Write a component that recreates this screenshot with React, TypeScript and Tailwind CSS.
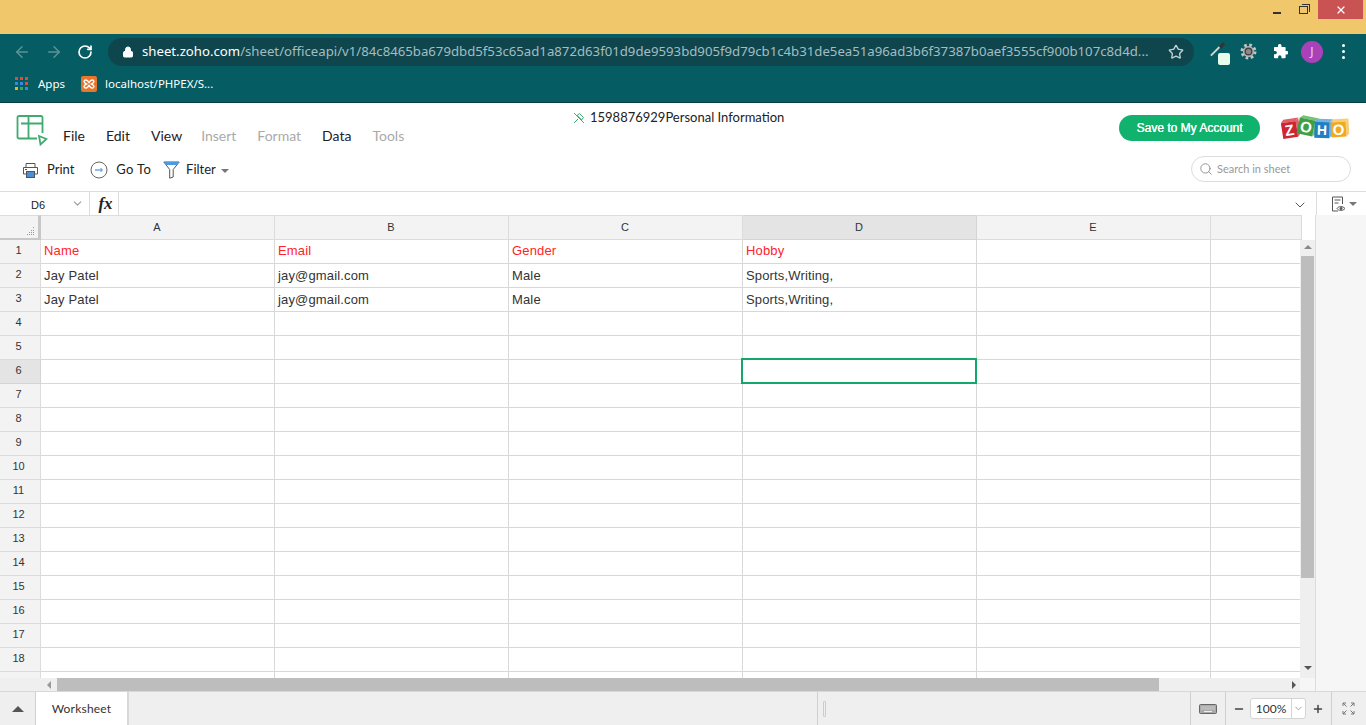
import { ArrowLeft, ArrowRight, RotateCw, Lock, Star, Minus, Plus, X, ChevronDown, Search } from "lucide-react";

const rows = Array.from({ length: 19 }, (_, i) => i + 1);
const cols = ["A", "B", "C", "D", "E", ""];
const data: Record<number, string[]> = {
  1: ["Name", "Email", "Gender", "Hobby"],
  2: ["Jay Patel", "jay@gmail.com", "Male", "Sports,Writing,"],
  3: ["Jay Patel", "jay@gmail.com", "Male", "Sports,Writing,"],
};

function SheetLogo() {
  return (
    <svg width="32" height="32" viewBox="0 0 32 32" fill="none" stroke="#3fab6f" strokeWidth="1.800">
      <path d="M21 23.500H3a1.500 1.500 0 0 1-1.500-1.500V2.500A1.500 1.500 0 0 1 3 1h22a1.500 1.500 0 0 1 1.500 1.500V18" />
      <path d="M5 8.500h21.500M12.500 2v21" />
      <path d="M23 21l7.500 3-6 5.500z" />
    </svg>
  );
}

function ZohoLogo() {
  const font = "'Liberation Sans',sans-serif";
  const tile = (x: number, y: number, w: number, h: number, rot: number, fill: string, side: string, letter: string, size: number) => (
    <g transform={`rotate(${rot} ${x + w / 2} ${y + h / 2})`}>
      <path d={`M${x} ${y}l3 -3h${w}l-3 3z`} fill={side} />
      <path d={`M${x + w} ${y}l3 -3v${h}l-3 3z`} fill={side} />
      <rect x={x} y={y} width={w} height={h} fill={fill} />
      <text x={x + w / 2} y={y + h / 2 + size * 0.36} fontFamily={font} fontWeight="700" fontSize={size} textAnchor="middle" fill="#fff">{letter}</text>
    </g>
  );
  return (
    <svg width="70" height="27" viewBox="0 0 70 27">
      {tile(1, 7, 15, 16, -9, "#cf2533", "#e0606a", "Z", 15)}
      {tile(17, 4, 16, 16, 12, "#3f9f45", "#74c278", "O", 15)}
      {tile(33.500, 7, 15, 16, 2, "#1f80c6", "#73b3e0", "H", 14)}
      {tile(50, 7, 15, 15, -3, "#f2a922", "#f7cd78", "O", 15)}
    </svg>
  );
}

function PrintIcon() {
  return (
    <svg width="17" height="17" viewBox="0 0 17 17" fill="none" stroke="#555" strokeWidth="1">
      <path d="M4 5V1.500h9V5M4 12H1.500V5.500h14V12H13" />
      <rect x="4.500" y="9.500" width="8" height="6" fill="#4a90d9" stroke="#555" />
      <path d="M3 7.500h2" />
    </svg>
  );
}

function GoToIcon() {
  return (
    <svg width="18" height="18" viewBox="0 0 18 18" fill="none">
      <circle cx="9" cy="9" r="8" stroke="#666" strokeWidth="1" />
      <path d="M5 9h7" stroke="#4a90d9" strokeWidth="1.200" />
      <path d="M10.500 7l2 2-2 2" stroke="#4a90d9" strokeWidth="1" />
    </svg>
  );
}

function FilterIcon() {
  return (
    <svg width="17" height="18" viewBox="0 0 17 18" fill="none">
      <path d="M.800 1h15.400l-6 7.500V16l-3.500 1.200V8.500z" stroke="#555" strokeWidth="1" />
      <path d="M.800 1h15.400l-2.400 3H3.200z" fill="#4a9be0" />
    </svg>
  );
}

function GearIcon() {
  return (
    <svg width="17" height="17" viewBox="0 0 17 17" fill="none">
      <circle cx="8.500" cy="8.500" r="6.500" stroke="#c4c4c4" strokeWidth="3" strokeDasharray="2.600 2.500" />
      <circle cx="8.500" cy="8.500" r="5.600" fill="#b4b4b4" />
      <circle cx="8.500" cy="8.500" r="4" fill="#444" />
      <circle cx="8.500" cy="8.500" r="2.600" fill="#8a8a8a" />
    </svg>
  );
}

function PuzzleIcon() {
  return (
    <svg width="16" height="16" viewBox="0 0 16 16" fill="#fff">
      <path d="M6 1.500a1.800 1.800 0 0 1 3.500 0V3h3.300a.8.800 0 0 1 .8.800V7H15a1.800 1.800 0 0 1 0 3.500h-1.400v3a.8.800 0 0 1-.8.800H9.500V13a1.700 1.700 0 0 0-3.400 0v1.300H2.800A.8.800 0 0 1 2 13.500v-3.200h1.200a1.700 1.700 0 0 0 0-3.400H2V3.800A.8.800 0 0 1 2.800 3H6z" />
    </svg>
  );
}

function AppsIcon() {
  const c = ["#e5483f", "#e5483f", "#e5483f", "#3a87e0", "#3a87e0", "#e5483f", "#f4b400", "#3aa757", "#3a87e0"];
  return (
    <span className="grid grid-cols-3 gap-[2px] w-[13px]">
      {c.map((k, i) => (
        <span key={i} className="w-[3px] h-[3px]" style={{ backgroundColor: k }} />
      ))}
    </span>
  );
}

function XamppIcon() {
  return (
    <svg width="16" height="16" viewBox="0 0 16 16">
      <rect width="16" height="16" rx="2" fill="#e8762c" />
      <path d="M3.500 4.500C5 3 7 5 8 6.500 9 5 11 3 12.500 4.500S11.500 7.500 10.500 8c1 .5 3.500 2 2 3.500S9 11 8 9.500C7 11 5 13 3.500 11.500S4.500 8.500 5.500 8c-1-.5-3.500-2-2-3.500z" fill="none" stroke="#fff" strokeWidth="1.400" />
    </svg>
  );
}

function KeyboardIcon() {
  return (
    <svg width="18" height="10" viewBox="0 0 18 10">
      <rect x=".5" y=".5" width="17" height="9" rx="1" fill="#aaa" stroke="#666" />
      <path d="M2.500 3h13M2.500 5h13" stroke="#eee" strokeWidth="1" strokeDasharray="1 1" />
      <path d="M5 7.500h8" stroke="#eee" />
    </svg>
  );
}

function ExpandIcon() {
  return (
    <svg width="13" height="13" viewBox="0 0 13 13" fill="none" stroke="#777" strokeWidth="1">
      <path d="M1 4V1h3M1 1l3.500 3.500M9 1h3v3M12 1L8.500 4.500M1 9v3h3M1 12l3.500-3.500M9 12h3V9M12 12L8.500 8.500" />
    </svg>
  );
}

function ViewIcon() {
  return (
    <svg width="15" height="16" viewBox="0 0 15 16" fill="none" stroke="#555" strokeWidth="1">
      <path d="M7 15H1.500V1h10v7" />
      <path d="M3.500 4h6M3.500 7h4" />
      <path d="M6 12.500c1.500-2.500 6-2.500 8 0-2 2.500-6.500 2.500-8 0z" fill="#fff" />
      <circle cx="10" cy="12.500" r="1" fill="#555" />
    </svg>
  );
}

function Caret({ up, color = "#777", className = "" }: { up?: boolean; color?: string; className?: string }) {
  return (
    <span
      className={(up ? "block shrink-0 w-0 h-0 border-x-[4px] border-x-transparent border-b-[4px] " : "block shrink-0 w-0 h-0 border-x-[4px] border-x-transparent border-t-[4px] ") + className}
      style={up ? { borderBottomColor: color } : { borderTopColor: color }}
    />
  );
}

export default function App() {
  return (
    <div className="w-[1366px] h-[725px] overflow-hidden flex flex-col bg-white font-['Liberation_Sans',sans-serif]">
      {/* Window title strip */}
      <div className="h-[34px] bg-[#f0c76a] flex justify-end items-start shrink-0">
        <div className="w-[27px] h-[19px] flex items-center justify-center mt-[1px] ml-[2px]">
          <span className="w-[8px] h-[2px] bg-[#333] mt-[5px]" />
        </div>
        <div className="w-[27px] h-[19px] flex items-center justify-center mr-[1px]">
          <span className="relative w-[9px] h-[8px] border border-[#333] mt-[1px]">
            <span className="absolute -top-[3px] -right-[3px] w-[8px] h-[8px] border-t border-r border-[#333]" />
          </span>
        </div>
        <div className="w-[45px] h-[19px] bg-[#c95252] flex items-center justify-center mr-[3px]">
          <X size={12} color="#fff" strokeWidth={2.500} />
        </div>
      </div>

      {/* Address row */}
      <div className="h-[34px] bg-[#055c62] flex items-center shrink-0 pt-[1px]">
        <div className="w-[108px] flex items-center pl-[13px] gap-[14px]">
          <ArrowLeft size={18} color="#5c9297" strokeWidth={2} />
          <ArrowRight size={18} color="#5c9297" strokeWidth={2} />
          <RotateCw size={16} color="#fff" strokeWidth={2.500} />
        </div>
        <div className="w-[1086px] h-[28px] rounded-full bg-[#0f464e] flex items-center pl-[14px] pr-[10px] font-['Noto_Sans',sans-serif] text-[13.2px]">
          <Lock size={12} color="#fff" fill="#fff" strokeWidth={2} className="mr-[8px] shrink-0" />
          <span className="text-white">sheet.zoho.com</span>
          <span className="text-[#a3bdc0] flex-1 min-w-0 whitespace-nowrap">/sheet/officeapi/v1/84c8465ba679dbd5f53c65ad1a872d63f01d9de9593bd905f9d79cb1c4b31de5ea51a96ad3b6f37387b0aef3555cf900b107c8d4d...</span>
          <Star size={16} color="#c4d3d5" strokeWidth={2} className="shrink-0" />
        </div>
        <div className="flex items-center ml-[14px]">
          <span className="relative block w-[20px] h-[20px] mr-[12px]">
            <span className="absolute left-[1px] top-[8px] w-[13px] h-[2px] bg-[#d6d6d6] -rotate-45" />
            <span className="absolute left-[11px] top-[2px] w-[6px] h-[3px] bg-[#333] -rotate-45" />
            <span className="absolute left-[10px] top-[11px] w-[12px] h-[12px] rounded-[2px] bg-[#e6fbec]" />
          </span>
          <GearIcon />
          <span className="ml-[15px] flex"><PuzzleIcon /></span>
          <span className="ml-[13px] w-[22px] h-[22px] rounded-full bg-[#a942b8] text-[#f0d0f4] text-[12px] flex items-center justify-center font-['Noto_Sans',sans-serif]">J</span>
          <span className="ml-[19px] flex flex-col gap-[3px]">
            <span className="block w-[3px] h-[3px] rounded-full bg-white" />
            <span className="block w-[3px] h-[3px] rounded-full bg-white" />
            <span className="block w-[3px] h-[3px] rounded-full bg-white" />
          </span>
        </div>
      </div>

      {/* Bookmarks */}
      <div className="h-[35px] bg-[#055c62] border-b border-[#033f44] flex items-center shrink-0 pl-[15px] pb-[3px] text-white text-[11.500px] font-['Noto_Sans',sans-serif]">
        <AppsIcon />
        <span className="ml-[10px]">Apps</span>
        <span className="ml-[16px] flex"><XamppIcon /></span>
        <span className="ml-[8px]">localhost/PHPEX/S...</span>
      </div>

      {/* Zoho header */}
      <div className="h-[89px] border-b border-[#dcdcdc] flex shrink-0 relative font-[Lato,sans-serif]">
        <div className="flex flex-col">
          <div className="flex items-start pl-[16px] pt-[12px] h-[49px]">
            <SheetLogo />
            <div className="flex text-[14px] gap-[21px] ml-[15px] mt-[10px] text-[#222]">
              <span>File</span>
              <span>Edit</span>
              <span>View</span>
              <span className="text-[#aaa] -ml-[2px]">Insert</span>
              <span className="text-[#aaa]">Format</span>
              <span>Data</span>
              <span className="text-[#aaa]">Tools</span>
            </div>
          </div>
          <div className="flex items-center pl-[22px] h-[30px] text-[13px] text-[#222] mt-[3px]">
            <PrintIcon />
            <span className="ml-[8px]">Print</span>
            <span className="ml-[16px] flex"><GoToIcon /></span>
            <span className="ml-[8px] tracking-[0.3px]">Go To</span>
            <span className="ml-[12px] flex"><FilterIcon /></span>
            <span className="ml-[6px]">Filter</span>
            <Caret className="ml-[5px] mt-[1px]" />
          </div>
        </div>
        <div className="absolute left-[573px] top-[5px] flex items-center text-[13px] text-[#222]">
          <svg width="12" height="12" viewBox="0 0 12 12" fill="none" stroke="#3fab6f" strokeWidth="1" className="mr-[5px]">
            <path d="M1 11l4-4M4 3.500L8.500 8M6.500 1.500l4 4-2 2.500-4.500-4.500zM1 1l10 10" />
          </svg>
          1598876929Personal Information
        </div>
        <div className="ml-auto flex flex-col items-end pr-[15px]">
          <div className="flex items-center mt-[12px] h-[26px]">
            <div className="w-[141px] h-[26px] rounded-full bg-[#10b26d] text-white text-[12px] font-['Liberation_Sans',sans-serif] [text-shadow:0.3px_0_0_#fff] flex items-center justify-center">Save to My Account</div>
            <span className="ml-[21px] flex"><ZohoLogo /></span>
          </div>
          <div className="mt-[15px] w-[160px] h-[26px] rounded-full border border-[#dcdcdc] flex items-center pl-[7px] text-[11px] text-[#999]">
            <Search size={14} color="#888" strokeWidth={1.500} className="mr-[4px]" />
            Search in sheet
          </div>
        </div>
      </div>

      {/* Formula bar */}
      <div className="h-[23px] flex shrink-0 text-[11px] text-[#222]">
        <div className="w-[90px] border-r border-[#dcdcdc] flex items-center relative pl-[31px] pt-[3px]">
          D6
          <ChevronDown size={13} color="#999" className="absolute right-[5px] top-[5px]" />
        </div>
        <div className="w-[29px] border-r border-[#dcdcdc] flex items-center justify-center font-['Liberation_Serif',serif] italic font-bold text-[17px] pl-[3px]">fx</div>
        <div className="flex-1 flex items-center justify-end pr-[8px] pt-[2px] border-r border-[#dcdcdc]">
          <ChevronDown size={16} color="#555" strokeWidth={1.500} />
        </div>
        <div className="w-[49px] flex items-center pl-[14px] gap-[3px]">
          <ViewIcon />
          <Caret />
        </div>
      </div>

      {/* Sheet */}
      <div className="h-[476px] flex shrink-0">
        <div className="w-[1316px] relative overflow-hidden border-r border-[#dcdcdc]">
          <div className="grid grid-cols-[41px_234px_234px_234px_234px_234px_91px] grid-rows-[25px] auto-rows-[24px] text-[13px]">
            <div className="bg-[#f3f3f3] border-t border-[#dcdcdc] border-b-2 border-r-[3px] border-b-[#c8c8c8] border-r-[#c8c8c8] flex items-end justify-end pr-[3px] pb-[2px]">
              <svg width="10" height="9" viewBox="0 0 10 9" fill="#999">
                <rect x="8" y="0" width="1" height="1" /><rect x="6" y="3" width="1" height="1" /><rect x="8" y="3" width="1" height="1" />
                <rect x="4" y="5" width="1" height="1" /><rect x="6" y="5" width="1" height="1" /><rect x="8" y="5" width="1" height="1" />
                <rect x="2" y="7" width="1" height="1" /><rect x="4" y="7" width="1" height="1" /><rect x="6" y="7" width="1" height="1" /><rect x="8" y="7" width="1" height="1" />
              </svg>
            </div>
            {cols.map((c, i) => (
              <div
                key={i}
                className={
                  c === "D"
                    ? "bg-[#e4e4e4] border-t border-b border-r border-[#d4d4d4] flex items-center justify-center pb-[1px] pr-[1px] text-[11px] text-[#333]"
                    : "bg-[#f3f3f3] border-t border-b border-r border-[#dcdcdc] flex items-center justify-center pb-[1px] pr-[1px] text-[11px] text-[#333]"
                }
              >
                {c}
              </div>
            ))}
            {rows.map((r) => (
              <div key={r} className="contents">
                <div
                  className={
                    r === 6
                      ? "bg-[#e4e4e4] border-b border-r border-[#d4d4d4] flex items-center justify-center pr-[3px] pb-[2px] text-[11px] text-[#333]"
                      : "bg-[#f3f3f3] border-b border-r border-[#dcdcdc] flex items-center justify-center pr-[3px] pb-[2px] text-[11px] text-[#333]"
                  }
                >
                  {r}
                </div>
                {cols.map((_, ci) => (
                  <div
                    key={ci}
                    className={
                      r === 6 && ci === 3
                        ? "relative z-10 border-b border-r border-[#d8d8d8]"
                        : r === 1
                        ? "border-b border-r border-[#d8d8d8] flex items-center pl-[3px] pb-[2px] text-[#ff2328] tracking-[0.15px]"
                        : "border-b border-r border-[#d8d8d8] flex items-center pl-[3px] text-[#333] tracking-[0.15px]"
                    }
                  >
                    {r === 6 && ci === 3 ? (
                      <span className="absolute -left-[2px] -top-[2px] -right-[1px] -bottom-[1px] border-2 border-[#14a76c]" />
                    ) : (
                      data[r]?.[ci] ?? ""
                    )}
                  </div>
                ))}
              </div>
            ))}
          </div>

          {/* Vertical scrollbar */}
          <div className="absolute right-0 top-[25px] w-[15px] h-[438px] bg-[#efefef] flex flex-col items-center">
            <Caret up color="#888" className="mt-[5px]" />
            <span className="block mt-[7px] w-[13px] h-[322px] bg-[#bdbdbd]" />
            <Caret color="#555" className="mt-auto mb-[8px]" />
          </div>

          {/* Horizontal scrollbar */}
          <div className="absolute left-0 right-0 bottom-0 h-[13px] bg-[#efefef] flex items-center">
            <span className="block ml-[47px] w-0 h-0 border-y-[4px] border-y-transparent border-r-[4px] border-r-[#999]" />
            <span className="block ml-[6px] w-[1102px] h-[13px] bg-[#bdbdbd]" />
            <span className="block ml-[133px] w-0 h-0 border-y-[4px] border-y-transparent border-l-[4px] border-l-[#555]" />
            <span className="absolute right-0 top-0 w-[15px] h-[13px] bg-[#f6f6f6]" />
          </div>
        </div>
        <div className="flex-1 bg-[#f6f6f6]" />
      </div>

      {/* Bottom bar */}
      <div className="flex-1 bg-[#efefef] border-t border-[#d8d8d8] flex text-[#333]">
        <div className="w-[36px] border-r border-[#d0d0d0] flex items-center justify-center">
          <span className="block w-0 h-0 border-x-[6px] border-x-transparent border-b-[6px] border-b-[#555]" />
        </div>
        <div className="w-[91px] bg-white flex items-center justify-center text-[12px] font-[Lato,sans-serif] tracking-[0.2px]">Worksheet</div>
        <div className="w-[2px] bg-[#d8d8d8]" />
        <div className="w-[689px] border-r border-[#d0d0d0]" />
        <div className="w-[373px] border-r border-[#d0d0d0] pl-[5px] flex items-center">
          <span className="block w-[3px] h-[16px] border border-[#ccc] rounded-[1px]" />
        </div>
        <div className="w-[35px] border-r border-[#d0d0d0] flex items-center justify-center">
          <KeyboardIcon />
        </div>
        <div className="w-[106px] border-r border-[#d0d0d0] flex items-center pl-[7px]">
          <Minus size={12} color="#444" strokeWidth={3} />
          <div className="ml-[5px] w-[56px] h-[21px] bg-white border border-[#d4d4d4] rounded-[3px] flex items-center text-[12px] font-[Lato,sans-serif]">
            <span className="w-[40px] text-center">100%</span>
            <span className="h-full border-l border-[#d4d4d4] flex-1 flex items-center justify-center">
              <ChevronDown size={11} color="#999" />
            </span>
          </div>
          <Plus size={12} color="#444" strokeWidth={3} className="ml-[6px]" />
        </div>
        <div className="flex-1 flex items-center justify-center pr-[1px]">
          <ExpandIcon />
        </div>
      </div>
    </div>
  );
}
